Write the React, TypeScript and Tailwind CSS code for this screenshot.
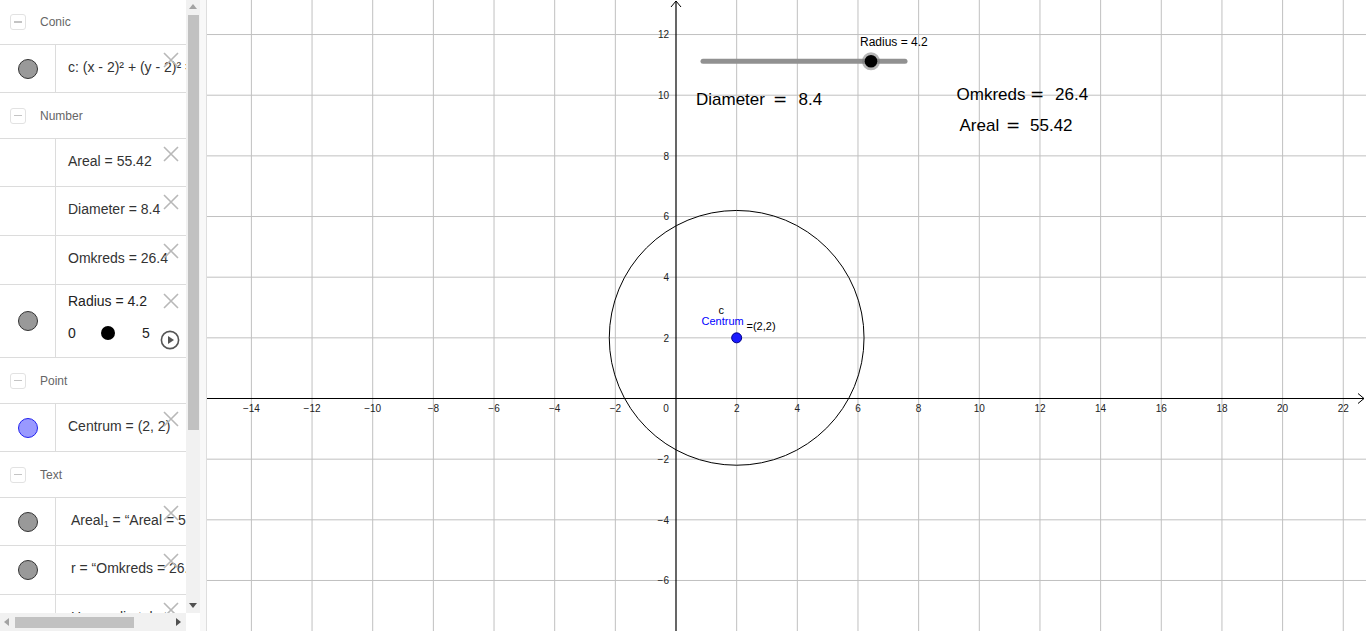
import React from 'react';

const OX = 676;
const OY = 398.5;
const S = 30.33;

const px = (v: number) => OX + v * S;
const py = (v: number) => OY - v * S;

const xTicks = [-14, -12, -10, -8, -6, -4, -2, 2, 4, 6, 8, 10, 12, 14, 16, 18, 20, 22];
const yTicks = [-6, -4, -2, 2, 4, 6, 8, 10, 12];
const gridX = [-16, -14, -12, -10, -8, -6, -4, -2, 2, 4, 6, 8, 10, 12, 14, 16, 18, 20, 22];
const gridY = [-8, -6, -4, -2, 2, 4, 6, 8, 10, 12];

const fmt = (n: number) => (n < 0 ? '\u2212' + Math.abs(n) : String(n));

const Marble = ({ blue }: { blue?: boolean }) => (
  <div
    className={
      blue
        ? 'h-[20px] w-[20px] rounded-full border border-[#2222ee] bg-[#9999ff]'
        : 'h-[20px] w-[20px] rounded-full border border-[#333333] bg-[#999999]'
    }
  />
);

const DeleteX = ({ top = 7 }: { top?: number }) => (
  <svg
    className="absolute right-[7px]"
    style={{ top }}
    width="16"
    height="16"
    viewBox="0 0 16 16"
  >
    <path d="M1 1 L15 15 M15 1 L1 15" stroke="#b8b8b8" strokeWidth="1.6" />
  </svg>
);

const Header = ({ label, h = 46 }: { label: string; h?: number }) => (
  <div className="flex shrink-0 items-center border-b border-[#dcdcdc]" style={{ height: h }}>
    <div className="ml-[10px] flex h-[16px] w-[16px] items-center justify-center rounded-[3px] border border-[#e2e2e2]">
      <div className="h-[1.5px] w-[8px] bg-[#c4c4c4]" />
    </div>
    <span className="ml-[14px] text-[12px] text-[#666666]">{label}</span>
  </div>
);

const Row = ({
  children,
  marble,
  blue,
  h = 48,
  wide,
}: {
  children: React.ReactNode;
  marble?: boolean;
  blue?: boolean;
  h?: number;
  wide?: boolean;
}) => (
  <div className="relative flex shrink-0 border-b border-[#dcdcdc]" style={{ height: h }}>
    <div className="flex w-[56px] shrink-0 items-center justify-center border-r border-[#dcdcdc]">
      {marble && <Marble blue={blue} />}
    </div>
    <div
      className={
        wide
          ? 'flex items-center whitespace-nowrap pb-[3px] pl-[15px] text-[14px] text-[#333333]'
          : 'flex items-center whitespace-nowrap pb-[3px] pl-[12px] text-[14px] text-[#333333]'
      }
    >
      {children}
    </div>
    <DeleteX />
  </div>
);

const AlgebraView = () => (
  <div className="flex h-full w-[200px] shrink-0">
    <div className="flex w-[186px] flex-col">
      <div className="flex flex-1 flex-col overflow-hidden">
        <Header label="Conic" h={45} />
        <Row marble>c: (x - 2)² + (y - 2)² = 17.64</Row>
        <Header label="Number" />
        <Row>Areal = 55.42</Row>
        <Row h={49}>Diameter = 8.4</Row>
        <Row h={49}>Omkreds = 26.4</Row>
        <div className="relative flex h-[73px] shrink-0 border-b border-[#dcdcdc]">
          <div className="flex w-[56px] shrink-0 items-center justify-center border-r border-[#dcdcdc]">
            <Marble />
          </div>
          <div className="flex flex-col whitespace-nowrap pl-[12px] pt-[6px] text-[14px] text-[#222222]">
            <div className="leading-[20px]">Radius = 4.2</div>
            <div className="mt-[12px] flex items-center leading-[20px]">
              <span className="w-[8px]">0</span>
              <span className="ml-[25px] h-[14px] w-[14px] rounded-full bg-black" />
              <span className="ml-[27px]">5</span>
            </div>
          </div>
          <DeleteX top={8} />
          <svg className="absolute left-[160px] top-[45px]" width="20" height="20" viewBox="0 0 20 20">
            <circle cx="10" cy="10" r="8.6" fill="none" stroke="#555555" strokeWidth="1.6" />
            <path d="M8 6 L14 10 L8 14 Z" fill="#555555" />
          </svg>
        </div>
        <Header label="Point" />
        <Row marble blue>
          Centrum = (2, 2)
        </Row>
        <Header label="Text" />
        <Row marble wide>
          <span>
            Areal<sub className="text-[9px]">1</sub> = “Areal = 55.42”
          </span>
        </Row>
        <Row marble wide h={49}>
          r = “Omkreds = 26.4”
        </Row>
        <Row wide>Hemmelig tekst</Row>
      </div>
      <div className="relative flex h-[18px] shrink-0 items-center bg-[#f1f1f1]">
        <svg className="absolute left-[4px]" width="6" height="8" viewBox="0 0 6 8">
          <path d="M5 0 L0 4 L5 8 Z" fill="#a3a3a3" />
        </svg>
        <div className="ml-[15px] h-[11px] w-[119px] bg-[#c1c1c1]" />
        <svg className="absolute left-[176px]" width="6" height="8" viewBox="0 0 6 8">
          <path d="M0 0 L5 4 L0 8 Z" fill="#505050" />
        </svg>
      </div>
    </div>
    <div className="flex w-[14px] flex-col">
      <div className="relative flex h-[613px] flex-col items-center bg-[#f1f1f1]">
        <svg className="mt-[4px]" width="8" height="6" viewBox="0 0 8 6">
          <path d="M0 5 L4 0 L8 5 Z" fill="#a3a3a3" />
        </svg>
        <div className="mt-[5px] h-[415px] w-[11px] bg-[#c1c1c1]" />
        <svg className="absolute bottom-[4px]" width="8" height="6" viewBox="0 0 8 6">
          <path d="M0 0 L8 0 L4 5 Z" fill="#505050" />
        </svg>
      </div>
      <div className="flex-1 bg-white" />
    </div>
  </div>
);

const EQ = "'DejaVu Sans', 'Liberation Sans', sans-serif";

const GraphicsView = () => (
  <svg className="block flex-1" width="1159" height="631" viewBox="207 0 1159 631">
    <rect x="207" y="0" width="1159" height="631" fill="#ffffff" />
    {gridX.map((v) => (
      <line key={'gx' + v} x1={px(v)} y1={0} x2={px(v)} y2={631} stroke="#c0c0c0" strokeWidth="1" />
    ))}
    {gridY.map((v) => (
      <line key={'gy' + v} x1={207} y1={py(v)} x2={1366} y2={py(v)} stroke="#c0c0c0" strokeWidth="1" />
    ))}
    {/* axes */}
    <line x1={207} y1={OY} x2={1364} y2={OY} stroke="#000" strokeWidth="1.2" />
    <line x1={OX} y1={1} x2={OX} y2={631} stroke="#000" strokeWidth="1.2" />
    <path d={`M1358 ${OY - 5} L1364 ${OY} L1358 ${OY + 5}`} fill="none" stroke="#000" strokeWidth="1" />
    <path d={`M${OX - 5} 7 L${OX} 1 L${OX + 5} 7`} fill="none" stroke="#000" strokeWidth="1" />
    <g fontFamily="'Liberation Sans', Arial, sans-serif" fontSize="10" fill="#222">
      {xTicks.map((v) => (
        <text key={'tx' + v} x={px(v)} y={412} textAnchor="middle">
          {fmt(v)}
        </text>
      ))}
      <text x={666} y={412} textAnchor="middle">
        0
      </text>
      {yTicks.map((v) => (
        <text key={'ty' + v} x={669} y={py(v) + 3.7} textAnchor="end">
          {fmt(v)}
        </text>
      ))}
    </g>
    {/* circle c */}
    <circle cx={px(2)} cy={py(2)} r={4.2 * S} fill="none" stroke="#000" strokeWidth="1" />
    {/* Centrum */}
    <circle cx={px(2)} cy={py(2)} r={5} fill="#1a1aff" stroke="#00008a" strokeWidth="1" />
    <g fontFamily="'Liberation Sans', Arial, sans-serif" fontSize="11">
      <text x={718.5} y={313.5} fill="#000">
        c
      </text>
      <text x={701.5} y={325} fill="#0000ff">
        Centrum
      </text>
      <text x={746.5} y={330} fill="#000">
        =(2,2)
      </text>
      <text x={860} y={46} fill="#000" fontSize="12">
        Radius = 4.2
      </text>
    </g>
    {/* slider */}
    <line x1={703} y1={61.3} x2={905} y2={61.3} stroke="#919191" strokeWidth="5" strokeLinecap="round" />
    <circle cx={871} cy={61.3} r={9} fill="#7a7a7a" fillOpacity="0.55" />
    <circle cx={871} cy={61.3} r={6.3} fill="#000" />
    {/* texts */}
    <g fontFamily="'Liberation Sans', Arial, sans-serif" fontSize="17" fill="#000">
      <text x={696} y={104.5}>
        Diameter
      </text>
      <text x={773} y={104.5} fontFamily={EQ}>
        =
      </text>
      <text x={798.5} y={104.5}>
        8.4
      </text>
      <text x={956.5} y={100}>
        Omkreds
      </text>
      <text x={1030} y={100} fontFamily={EQ}>
        =
      </text>
      <text x={1055} y={100}>
        26.4
      </text>
      <text x={959.5} y={131}>
        Areal
      </text>
      <text x={1006} y={131} fontFamily={EQ}>
        =
      </text>
      <text x={1030} y={131}>
        55.42
      </text>
    </g>
  </svg>
);

export default function App() {
  return (
    <div
      className="flex h-[631px] w-[1366px] overflow-hidden bg-white"
      style={{ fontFamily: "'Liberation Sans', Arial, sans-serif" }}
    >
      <AlgebraView />
      <div className="w-[7px] shrink-0 border-r border-[#dedede] bg-[#f8f8f8]" />
      <GraphicsView />
    </div>
  );
}
